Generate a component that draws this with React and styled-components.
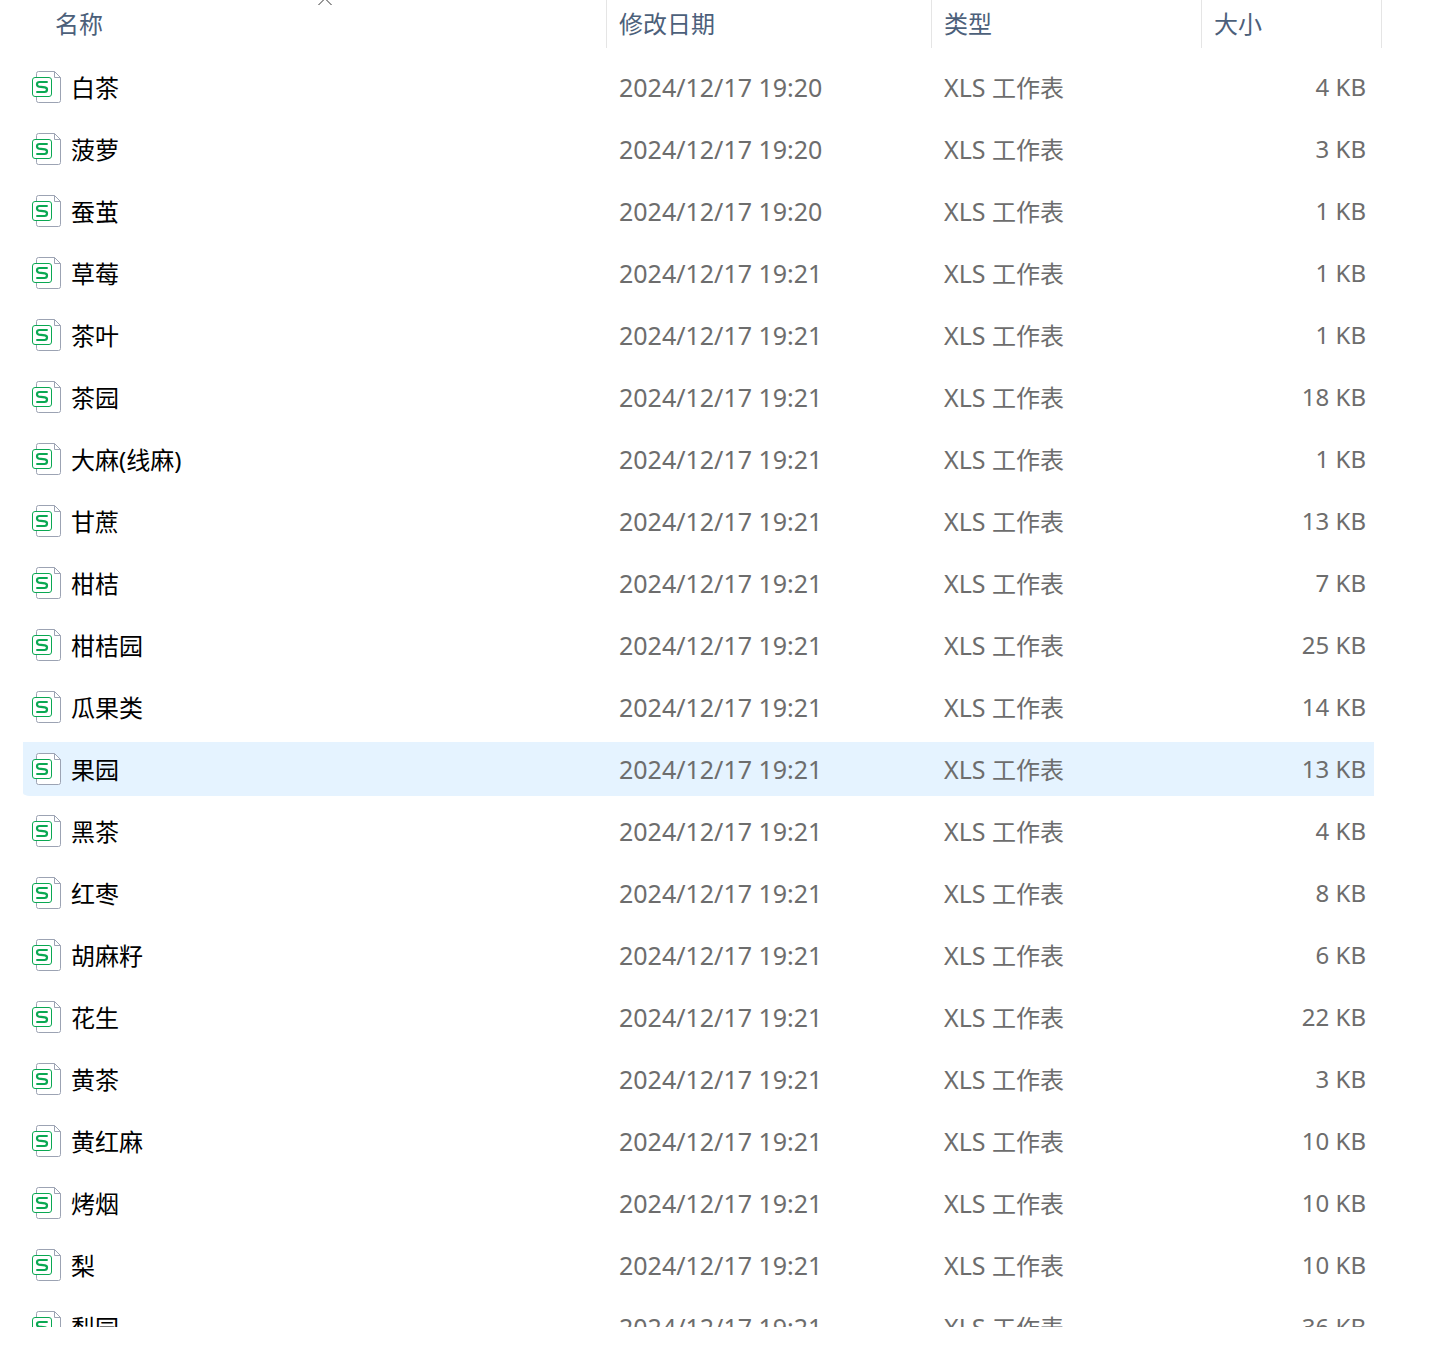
import React, { Component } from 'react'
import styled, { createGlobalStyle } from 'styled-components'

const GlobalStyle = createGlobalStyle`
    body {
        margin: 0;
        background: #fff;
        font-family: "Noto Sans", "Noto Sans CJK SC", sans-serif;
        font-size: 24px;
        line-height: 32px;
    }
`

const FileList = styled.main`
    box-sizing: border-box;
    height: calc(100vh - 41px);
    padding: 0 74px 0 23px;
    overflow-y: auto;
    scrollbar-width: none;
`

const Table = styled.table`
    width: 100%;
    table-layout: fixed;
    border-collapse: separate;
    border-spacing: 0;
`

const HeadCell = styled.th`
    width: ${props => props.$width || 'auto'};
    padding: 0 0 8px ${props => props.$indent || '0'};
    font-weight: 400;
`

const SortButton = styled.button`
    position: relative;
    display: block;
    width: 100%;
    height: 48px;
    padding: 0 12px;
    border: 0;
    border-right: 1px solid #e5e5e5;
    background: none;
    color: #4c607a;
    font: inherit;
    text-align: left;
    cursor: pointer;
`

const SortArrow = styled.svg`
    position: absolute;
    top: 0;
    left: 50%;
    width: 14px;
    height: 5px;
    margin-left: -7px;
`

// the transparent borders keep a gap between highlighted rows
const Cell = styled.td`
    height: 54px;
    padding: 0 12px;
    border: 0 solid transparent;
    border-width: 4px 0;
    background-clip: padding-box;
    color: #6d6d6d;
    white-space: nowrap;
`

const NameCell = styled(Cell)`
    padding-left: 9px;
    border-radius: 3px 0 0 7px;
    color: #000;
`

const SizeCell = styled(Cell)`
    padding-right: 8px;
    border-right-width: 8px;
    text-align: right;
`

const Row = styled.tr`
    ${Cell} {
        background-color: ${props => props.$selected ? '#e5f3ff' : 'transparent'};
    }
`

const FileName = styled.div`
    display: flex;
    align-items: center;
    gap: 9px;
`

const Label = styled.span`
    padding-top: 2px;
`

const Latin = styled.span`
    font-size: 25px;
`

const SheetIcon = styled.svg`
    flex: none;
    width: 30px;
    height: 32px;
`

const files = [
    ['白茶', '19:20', 4],
    ['菠萝', '19:20', 3],
    ['蚕茧', '19:20', 1],
    ['草莓', '19:21', 1],
    ['茶叶', '19:21', 1],
    ['茶园', '19:21', 18],
    ['大麻(线麻)', '19:21', 1],
    ['甘蔗', '19:21', 13],
    ['柑桔', '19:21', 7],
    ['柑桔园', '19:21', 25],
    ['瓜果类', '19:21', 14],
    ['果园', '19:21', 13],
    ['黑茶', '19:21', 4],
    ['红枣', '19:21', 8],
    ['胡麻籽', '19:21', 6],
    ['花生', '19:21', 22],
    ['黄茶', '19:21', 3],
    ['黄红麻', '19:21', 10],
    ['烤烟', '19:21', 10],
    ['梨', '19:21', 10],
    ['梨园', '19:21', 36],
]

const FileIcon = () => (
    <SheetIcon viewBox="0 0 30 32" fill="none" aria-hidden="true">
        <path d="M6.5 .5H22.5L28.5 6.5V29.5Q28.5 31.5 26.5 31.5H6.5Q4.5 31.5 4.5 29.5V2.5Q4.5 .5 6.5 .5Z" fill="#fff" stroke="#9ca3b3" />
        <path d="M22.5 .5V6.5H28.5" stroke="#9ca3b3" />
        <rect x=".5" y="6.5" width="19" height="19" rx="2.5" fill="#fff" stroke="#0aa852" />
        <path d="M15.7 11H7.5Q5 11 5 13.2Q5 15.2 7 15.6L13 16.4Q15 16.8 15 18.6Q15 21 12.5 21H4.3" stroke="#0aa852" strokeWidth="2.2" />
    </SheetIcon>
)

class App extends Component {
    constructor(props) {
        super(props)
        this.state = { selected: '果园', reversed: false }
        this.handleSort = this.handleSort.bind(this)
    }

    handleSort() {
        this.setState({ reversed: !this.state.reversed })
    }

    render() {
        const rows = this.state.reversed ? [...files].reverse() : files
        return (
            <FileList>
                <GlobalStyle />
                <Table>
                    <thead>
                        <tr>
                            <HeadCell scope="col" $indent="20px">
                                <SortButton type="button" onClick={this.handleSort}>
                                    名称
                                    <SortArrow viewBox="0 0 14 5" fill="none" aria-hidden="true">
                                        <path d="M.5 5L7 -1.5L13.5 5" stroke="#333" />
                                    </SortArrow>
                                </SortButton>
                            </HeadCell>
                            <HeadCell scope="col" $width="325px"><SortButton type="button">修改日期</SortButton></HeadCell>
                            <HeadCell scope="col" $width="270px"><SortButton type="button">类型</SortButton></HeadCell>
                            <HeadCell scope="col" $width="180px"><SortButton type="button">大小</SortButton></HeadCell>
                        </tr>
                    </thead>
                    <tbody>
                        {rows.map(([name, time, size]) => (
                            <Row
                                key={name}
                                $selected={name === this.state.selected}
                                onClick={() => this.setState({ selected: name })}
                            >
                                <NameCell><FileName><FileIcon /><Label>{name}</Label></FileName></NameCell>
                                <Cell><Latin>2024/12/17 {time}</Latin></Cell>
                                <Cell><Latin>XLS </Latin>工作表</Cell>
                                <SizeCell>{size} KB</SizeCell>
                            </Row>
                        ))}
                    </tbody>
                </Table>
            </FileList>
        )
    }
}

export default App
